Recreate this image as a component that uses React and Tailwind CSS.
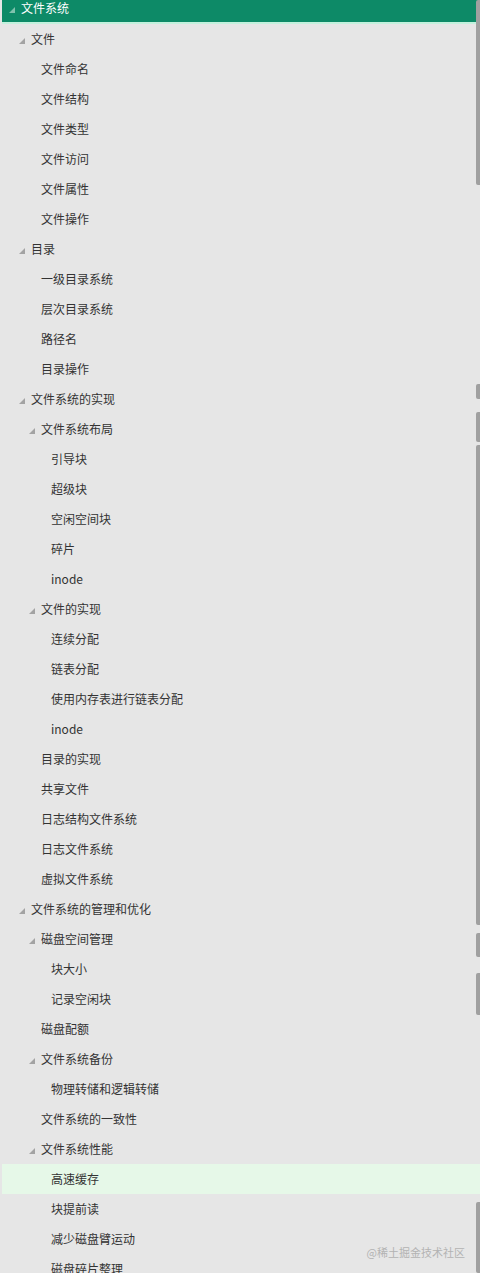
import React from "react";

// level, label, branch?
const items = [
  [0, "文件系统", true],
  [1, "文件", true],
  [2, "文件命名"],
  [2, "文件结构"],
  [2, "文件类型"],
  [2, "文件访问"],
  [2, "文件属性"],
  [2, "文件操作"],
  [1, "目录", true],
  [2, "一级目录系统"],
  [2, "层次目录系统"],
  [2, "路径名"],
  [2, "目录操作"],
  [1, "文件系统的实现", true],
  [2, "文件系统布局", true],
  [3, "引导块"],
  [3, "超级块"],
  [3, "空闲空间块"],
  [3, "碎片"],
  [3, "inode"],
  [2, "文件的实现", true],
  [3, "连续分配"],
  [3, "链表分配"],
  [3, "使用内存表进行链表分配"],
  [3, "inode"],
  [2, "目录的实现"],
  [2, "共享文件"],
  [2, "日志结构文件系统"],
  [2, "日志文件系统"],
  [2, "虚拟文件系统"],
  [1, "文件系统的管理和优化", true],
  [2, "磁盘空间管理", true],
  [3, "块大小"],
  [3, "记录空闲块"],
  [2, "磁盘配额"],
  [2, "文件系统备份", true],
  [3, "物理转储和逻辑转储"],
  [2, "文件系统的一致性"],
  [2, "文件系统性能", true],
  [3, "高速缓存"],
  [3, "块提前读"],
  [3, "减少磁盘臂运动"],
  [3, "磁盘碎片整理"],
];

const indent = ["w-0", "w-[10px]", "w-[20px]", "w-[30px]"];

// grey stripe on the right edge: [top, bottom]
const bars = [
  [0, 185],
  [384, 399],
  [412, 442],
  [445, 925],
  [933, 957],
  [973, 1015],
  [1202, 1273],
];

const Caret = ({ light }) => (
  <svg width="6" height="6" viewBox="0 0 6 6" className="mt-[3px] ml-[7px]">
    <polygon points="6,0 6,6 0,6" fill={light ? "#7fc2ad" : "#a3a3a3"} />
  </svg>
);

export default function App() {
  return (
    <div
      className="relative h-[1273px] w-[480px] overflow-hidden bg-[#e6e6e6]"
      style={{ fontFamily: '"Microsoft YaHei", "Noto Sans CJK SC", "Noto Sans", sans-serif' }}
    >
      <div className="-mt-[6px] flex flex-col">
        {items.map(([level, label, branch], i) => {
          const head = i === 0;
          const active = i === 39;
          return (
            <div
              key={i}
              className={`ml-[2px] flex h-[30px] items-center text-[12px] ${
                head
                  ? "border-b-2 border-[#c3f1dd] bg-[#0d8a67] text-white"
                  : active
                  ? "bg-[#e6f8e8] text-[#333333]"
                  : "text-[#333333]"
              }`}
            >
              <div className={`shrink-0 ${indent[level]}`} />
              <div className="flex w-[19px] shrink-0 items-center">
                {branch && <Caret light={head} />}
              </div>
              <span>{label}</span>
            </div>
          );
        })}
      </div>

      {bars.map(([t, b]) => (
        <div
          key={t}
          className="absolute right-0 w-[4px] rounded-l-[2px] bg-[#a0a0a0]"
          style={{ top: t, height: b - t }}
        />
      ))}

      <div className="absolute right-[15px] top-[1244px] text-[11px] text-[#b3b3b3]">
        @稀土掘金技术社区
      </div>
    </div>
  );
}
